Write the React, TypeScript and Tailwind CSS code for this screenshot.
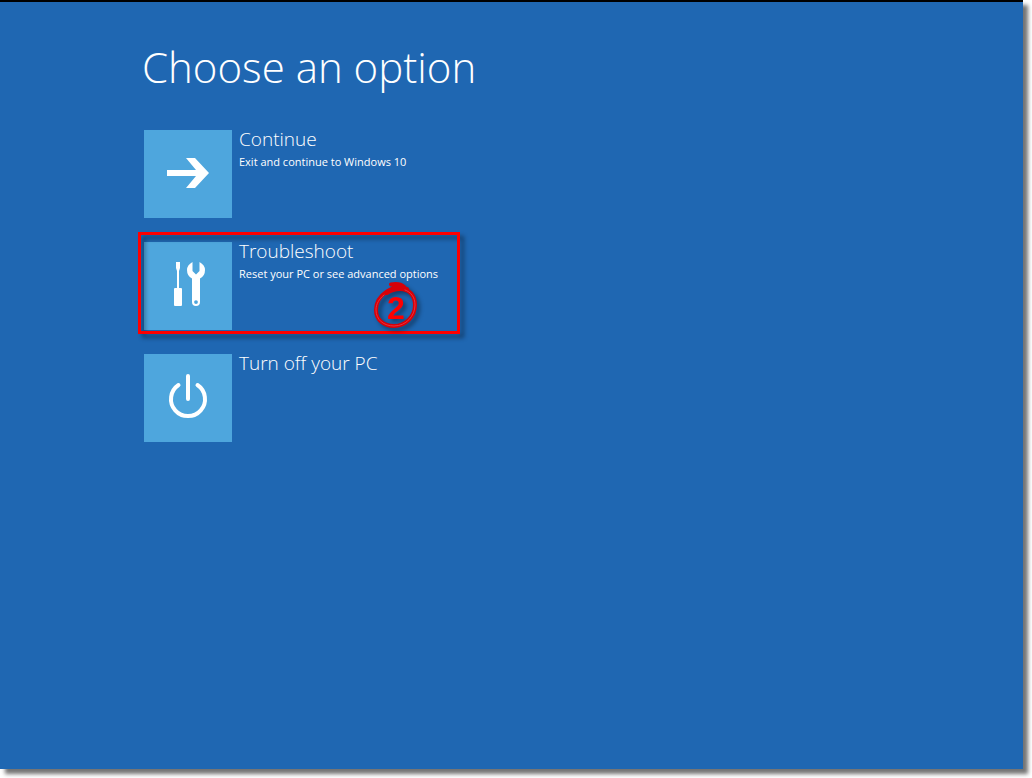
import type { ReactNode } from "react";

function ArrowIcon() {
  return (
    <svg viewBox="0 0 88 88" className="size-full" fill="#fff" aria-hidden="true">
      <path d="M23 40h29L42 28h9l14 15-14 15h-9l10-12H23z" />
    </svg>
  );
}

function ToolsIcon() {
  return (
    <svg viewBox="0 0 88 88" className="size-full" fill="#fff" aria-hidden="true">
      <path d="M32 20h4v6l-1 3v17h2q1 0 1 1v16q0 1-1 1h-6q-1 0-1-1V47q0-1 1-1h2V29l-1-3z" />
      <path
        fillRule="evenodd"
        d="M48.500 20v9l3.500 3.500 3.500-3.500v-9q5.500 3 5.500 8 0 6-5 8.500V60q0 4-4 4t-4-4V36.500q-5-2.500-5-8.500 0-5 5.500-8zM52 58.200a1.900 1.900 0 1 0 0 3.800a1.900 1.900 0 1 0 0-3.800z"
      />
    </svg>
  );
}

function PowerIcon() {
  return (
    <svg
      viewBox="0 0 88 88"
      className="size-full"
      fill="none"
      stroke="#fff"
      strokeWidth="4"
      strokeLinecap="round"
      aria-hidden="true"
    >
      <path d="M44 22v23M34.500 31a17 17 0 1 0 19 0" />
    </svg>
  );
}

function StepMarker() {
  return (
    <span className="absolute right-[34px] bottom-0 flex size-12 items-center justify-center font-['Liberation_Sans',sans-serif] text-[32px] leading-none font-bold text-[#ff0000] drop-shadow-[3px_3px_2px_rgba(0,0,0,0.4)]">
      <svg viewBox="0 0 48 48" className="absolute inset-0 size-full" fill="none" strokeLinecap="round" aria-hidden="true">
        <path
          d="M19 2.500C25 1.500 29 2 32 5M35 7C22 1 4 13 4 28C4 38 12 44 22 44C34 44 43 34 43 23C43 13 37 7 28 7C23 7 19 8 15 11"
          stroke="#d80008"
          strokeWidth="4"
        />
        <path d="M12 13C7 17 4 22 4 28C4 38 12 44 22 44C34 44 43 34 43 23C43 15 39 10 33 8" stroke="#e8323c" strokeWidth="1" />
      </svg>
      <span className="relative pt-1">2</span>
    </span>
  );
}

type OptionProps = {
  title: string;
  detail?: string;
  icon: ReactNode;
  highlighted?: boolean;
};

function Option({ title, detail, icon, highlighted }: OptionProps) {
  return (
    <button type="button" className="relative flex w-[310px] max-w-full items-start gap-[7px] text-left">
      <span className="size-[88px] shrink-0 bg-[#4ea6dd]">{icon}</span>
      <span className="flex flex-col">
        <span className="text-[19px] leading-[18px] font-light">{title}</span>
        {detail && <span className="text-[11px] leading-7 whitespace-nowrap">{detail}</span>}
      </span>
      {highlighted && (
        <span className="absolute -inset-x-1.5 -top-2.5 -bottom-1 border-3 border-[#ff0000] drop-shadow-[4px_4px_2px_rgba(0,0,0,0.4)]" />
      )}
      {highlighted && <StepMarker />}
    </button>
  );
}

export default function App() {
  return (
    <div className="flex min-h-screen bg-white pr-[9px] pb-[9px]">
      <main className="flex-1 border-t-2 border-black bg-[#1f67b2] px-36 pt-9 font-['Open_Sans',sans-serif] text-white shadow-[5px_5px_4px_rgba(0,0,0,0.55)]">
        <h1 className="-ml-0.5 text-[42px] leading-[58px] font-light">Choose an option</h1>
        <div className="mt-[34px] flex flex-col gap-6">
          <Option title="Continue" detail="Exit and continue to Windows 10" icon={<ArrowIcon />} />
          <Option title="Troubleshoot" detail="Reset your PC or see advanced options" icon={<ToolsIcon />} highlighted />
          <Option title="Turn off your PC" icon={<PowerIcon />} />
        </div>
      </main>
    </div>
  );
}
